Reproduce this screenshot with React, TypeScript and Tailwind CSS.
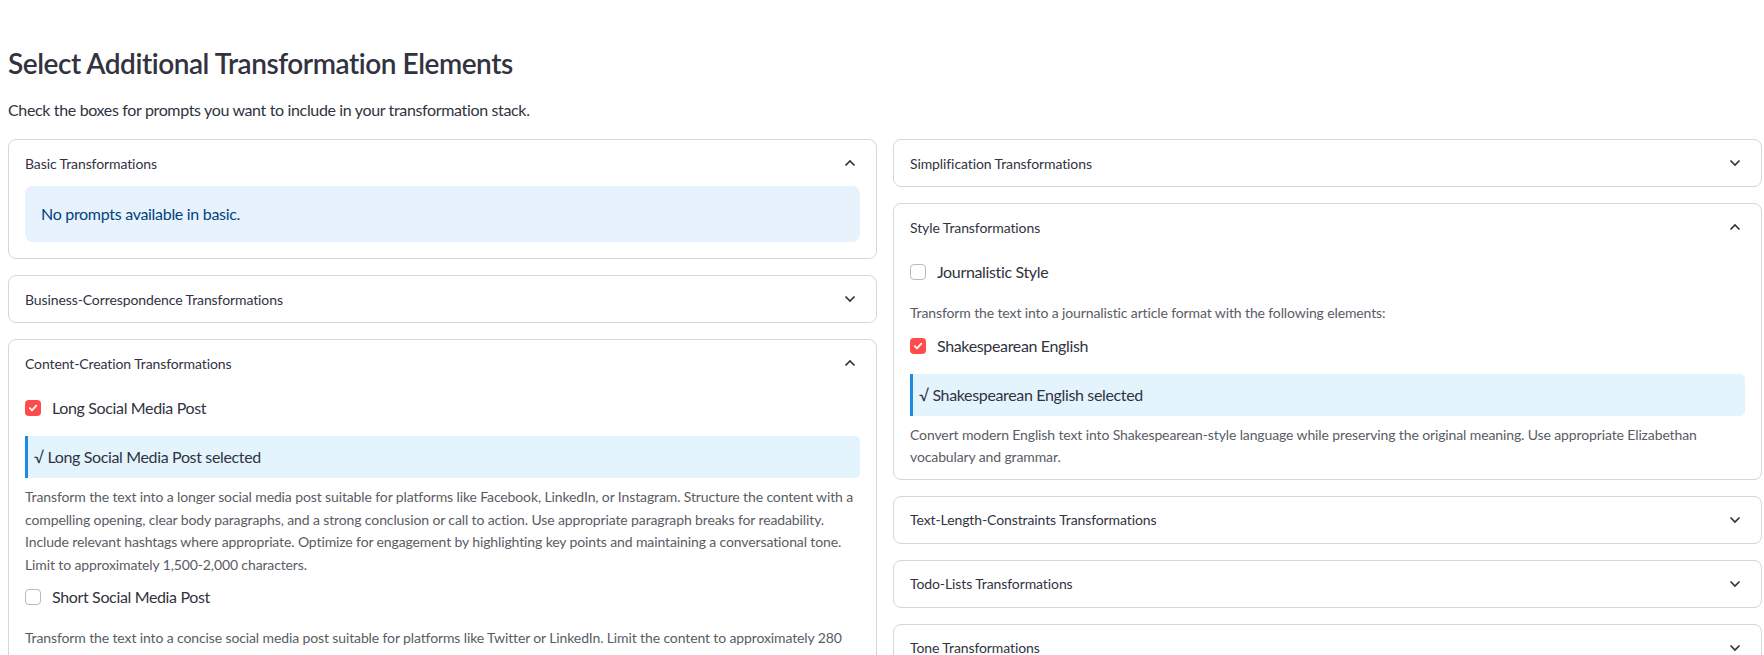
import { useState } from "react";

interface PromptItem {
  name: string;
  lines: string[];
}

interface Section {
  title: string;
  open: boolean;
  items: PromptItem[];
  empty?: string;
}

const leftSections: Section[] = [
  {
    title: "Basic Transformations",
    open: true,
    items: [],
    empty: "No prompts available in basic.",
  },
  { title: "Business-Correspondence Transformations", open: false, items: [] },
  {
    title: "Content-Creation Transformations",
    open: true,
    items: [
      {
        name: "Long Social Media Post",
        lines: [
          "Transform the text into a longer social media post suitable for platforms like Facebook, LinkedIn, or Instagram. Structure the content with a",
          "compelling opening, clear body paragraphs, and a strong conclusion or call to action. Use appropriate paragraph breaks for readability.",
          "Include relevant hashtags where appropriate. Optimize for engagement by highlighting key points and maintaining a conversational tone.",
          "Limit to approximately 1,500-2,000 characters.",
        ],
      },
      {
        name: "Short Social Media Post",
        lines: [
          "Transform the text into a concise social media post suitable for platforms like Twitter or LinkedIn. Limit the content to approximately 280",
          "characters while keeping the core message intact.",
        ],
      },
    ],
  },
];

const rightSections: Section[] = [
  { title: "Simplification Transformations", open: false, items: [] },
  {
    title: "Style Transformations",
    open: true,
    items: [
      {
        name: "Journalistic Style",
        lines: [
          "Transform the text into a journalistic article format with the following elements:",
        ],
      },
      {
        name: "Shakespearean English",
        lines: [
          "Convert modern English text into Shakespearean-style language while preserving the original meaning. Use appropriate Elizabethan",
          "vocabulary and grammar.",
        ],
      },
    ],
  },
  { title: "Text-Length-Constraints Transformations", open: false, items: [] },
  { title: "Todo-Lists Transformations", open: false, items: [] },
  { title: "Tone Transformations", open: false, items: [] },
];

const Chevron = ({ up }: { up: boolean }) => (
  <svg width="12" height="8" viewBox="0 0 12 8" className="text-[#31333f]">
    <path
      d={up ? "M1.5 6.5 L6 2 L10.5 6.5" : "M1.5 1.5 L6 6 L10.5 1.5"}
      fill="none"
      stroke="currentColor"
      strokeWidth="1.7"
    />
  </svg>
);

const Checkbox = ({ checked }: { checked: boolean }) =>
  checked ? (
    <span className="flex h-4 w-4 items-center justify-center rounded-[4px] bg-[#ff4b4b]">
      <svg width="10" height="10" viewBox="0 0 10 10">
        <path
          d="M1.8 5.2 L4 7.3 L8.3 2.6"
          fill="none"
          stroke="white"
          strokeWidth="1.8"
          strokeLinecap="round"
          strokeLinejoin="round"
        />
      </svg>
    </span>
  ) : (
    <span className="h-4 w-4 rounded-[4px] border border-[#b9bac0] bg-white" />
  );

const Expander = ({
  section,
  selected,
  toggle,
}: {
  section: Section;
  selected: Record<string, boolean>;
  toggle: (name: string) => void;
}) => {
  const [open, setOpen] = useState(section.open);

  return (
    <div className="rounded-lg border border-[#d6d6d9] bg-white">
      <div
        className="flex h-[46px] cursor-pointer items-center justify-between pl-4 pr-5"
        onClick={() => setOpen(!open)}
      >
        <span className="text-[14px] tracking-[-0.1px] text-[#31333f]">{section.title}</span>
        <Chevron up={open} />
      </div>
      {open && section.empty && (
        <div className="px-4 pb-4">
          <div className="flex h-[56px] items-center rounded-lg bg-[#e8f2fc] px-4 text-[16px] tracking-[-0.3px] text-[#004280]">
            {section.empty}
          </div>
        </div>
      )}
      {open && section.items.length > 0 && (
        <div className="px-4 pb-[10px] pt-[10px]">
          {section.items.map((item, i) => (
            <div key={item.name} className={i > 0 ? "mt-[9px]" : ""}>
              <label
                className="flex h-6 cursor-pointer items-center gap-[11px]"
                onClick={() => toggle(item.name)}
              >
                <Checkbox checked={!!selected[item.name]} />
                <span className="text-[16px] tracking-[-0.35px] text-[#31333f]">{item.name}</span>
              </label>
              {selected[item.name] && (
                <div className="mt-4 flex h-[42px] items-center rounded-r-[5px] border-l-[3px] border-[#1e88e5] bg-[#e3f4fd] pl-[6px] text-[16px] tracking-[-0.35px] text-[#31333f]">
                  √ {item.name} selected
                </div>
              )}
              <p
                className={`text-[14px] leading-[22.6px] tracking-[-0.12px] text-[#5a5c64] ${
                  selected[item.name] ? "mt-2" : "mt-[18px]"
                }`}
              >
                {item.lines.map((line, j) => (
                  <span key={j} className="block whitespace-nowrap">
                    {line}
                  </span>
                ))}
              </p>
            </div>
          ))}
        </div>
      )}
    </div>
  );
};

export default function App() {
  const [selected, setSelected] = useState<Record<string, boolean>>({
    "Long Social Media Post": true,
    "Shakespearean English": true,
  });

  const toggle = (name: string) =>
    setSelected((prev) => ({ ...prev, [name]: !prev[name] }));

  return (
    <div className="min-h-screen bg-white font-['Lato',sans-serif] text-[#31333f]">
      <div className="w-[1762px] pl-2 pt-[46px]">
        <h3 className="text-[28px] font-semibold leading-[34px] tracking-[-0.45px] text-[#31333f]">
          Select Additional Transformation Elements
        </h3>
        <p className="mt-[17px] text-[16px] leading-[26px] tracking-[-0.35px]">
          Check the boxes for prompts you want to include in your transformation stack.
        </p>
        <div className="mt-4 grid grid-cols-2 items-start gap-4">
          <div className="flex flex-col gap-4">
            {leftSections.map((s) => (
              <Expander key={s.title} section={s} selected={selected} toggle={toggle} />
            ))}
          </div>
          <div className="flex flex-col gap-4">
            {rightSections.map((s) => (
              <Expander key={s.title} section={s} selected={selected} toggle={toggle} />
            ))}
          </div>
        </div>
      </div>
    </div>
  );
}
